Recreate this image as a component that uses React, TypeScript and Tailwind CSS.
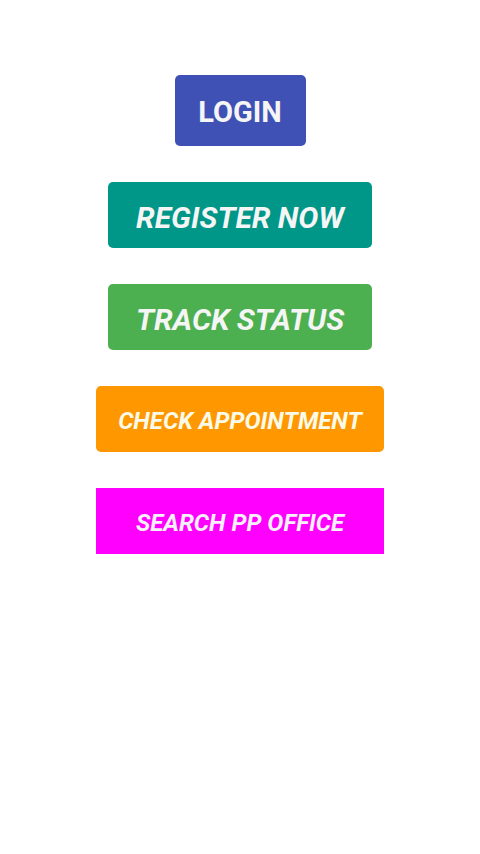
export default function App() {
  const font = { fontFamily: 'Roboto, "Noto Sans", sans-serif' };
  return (
    <div className="w-[480px] h-[854px] bg-white flex flex-col items-center pt-[75px] gap-[36px]" style={font}>
      <button className="w-[131px] h-[71px] rounded-[5px] bg-[#3f51b5] text-[#f5f5f5] font-bold text-[29px] flex items-center justify-center pt-[4px]">
        LOGIN
      </button>
      <button className="w-[264px] h-[66px] rounded-[5px] bg-[#009688] text-[#f5f5f5] font-bold italic text-[30px] flex items-center justify-center pt-[5px]">
        REGISTER NOW
      </button>
      <button className="w-[264px] h-[66px] rounded-[5px] bg-[#4caf50] text-[#f5f5f5] font-bold italic text-[30px] flex items-center justify-center pt-[5px]">
        TRACK STATUS
      </button>
      <button className="w-[288px] h-[66px] rounded-[5px] bg-[#ff9800] text-[#fafae8] font-bold italic text-[24px] flex items-center justify-center pt-[3px]">
        CHECK APPOINTMENT
      </button>
      <button className="w-[288px] h-[66px] bg-[#ff00ff] text-[#f8f0f8] font-bold italic text-[24px] flex items-center justify-center pt-[3px]">
        SEARCH PP OFFICE
      </button>
    </div>
  );
}
